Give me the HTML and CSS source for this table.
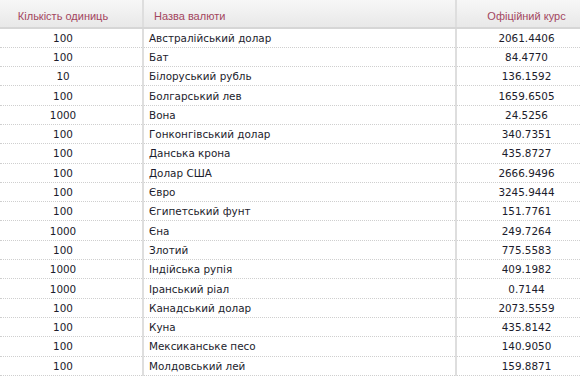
FILE: index.html
```html
<!DOCTYPE html>
<html lang="uk">
<head>
  <meta charset="UTF-8">
  <title>Офіційний курс гривні</title>
  <link rel="stylesheet" href="styles.css">
</head>
<body>
  <table class="rates">
    <thead>
      <tr>
        <th class="col-units">Кількість одиниць</th>
        <th class="col-name">Назва валюти</th>
        <th class="col-rate">Офіційний курс</th>
      </tr>
    </thead>
    <tbody>
      <tr><td class="col-units">100</td><td class="col-name">Австралійський долар</td><td class="col-rate">2061.4406</td></tr>
      <tr><td class="col-units">100</td><td class="col-name">Бат</td><td class="col-rate">84.4770</td></tr>
      <tr><td class="col-units">10</td><td class="col-name">Білоруський рубль</td><td class="col-rate">136.1592</td></tr>
      <tr><td class="col-units">100</td><td class="col-name">Болгарський лев</td><td class="col-rate">1659.6505</td></tr>
      <tr><td class="col-units">1000</td><td class="col-name">Вона</td><td class="col-rate">24.5256</td></tr>
      <tr><td class="col-units">100</td><td class="col-name">Гонконгівський долар</td><td class="col-rate">340.7351</td></tr>
      <tr><td class="col-units">100</td><td class="col-name">Данська крона</td><td class="col-rate">435.8727</td></tr>
      <tr><td class="col-units">100</td><td class="col-name">Долар США</td><td class="col-rate">2666.9496</td></tr>
      <tr><td class="col-units">100</td><td class="col-name">Євро</td><td class="col-rate">3245.9444</td></tr>
      <tr><td class="col-units">100</td><td class="col-name">Єгипетський фунт</td><td class="col-rate">151.7761</td></tr>
      <tr><td class="col-units">1000</td><td class="col-name">Єна</td><td class="col-rate">249.7264</td></tr>
      <tr><td class="col-units">100</td><td class="col-name">Злотий</td><td class="col-rate">775.5583</td></tr>
      <tr><td class="col-units">1000</td><td class="col-name">Індійська рупія</td><td class="col-rate">409.1982</td></tr>
      <tr><td class="col-units">1000</td><td class="col-name">Іранський ріал</td><td class="col-rate">0.7144</td></tr>
      <tr><td class="col-units">100</td><td class="col-name">Канадський долар</td><td class="col-rate">2073.5559</td></tr>
      <tr><td class="col-units">100</td><td class="col-name">Куна</td><td class="col-rate">435.8142</td></tr>
      <tr><td class="col-units">100</td><td class="col-name">Мексиканське песо</td><td class="col-rate">140.9050</td></tr>
      <tr><td class="col-units">100</td><td class="col-name">Молдовський лей</td><td class="col-rate">159.8871</td></tr>
    </tbody>
  </table>
</body>
</html>
```

FILE: styles.css
```css
* {
  box-sizing: border-box;
  margin: 0;
  padding: 0;
}
body {
  background: #ffffff;
  font-family: 'DejaVu Sans', Verdana, sans-serif;
  color: #1c1c2c;
  overflow: hidden;
}
.rates {
  width: 596px;
  border-collapse: collapse;
  table-layout: fixed;
}
.rates th {
  height: 28px;
  font-family: 'Liberation Sans', Tahoma, sans-serif;
  font-size: 11px;
  font-weight: normal;
  color: #a34660;
  background: linear-gradient(to bottom, #f7f7f7, #e8e8e8);
  border-bottom: 2px solid #d6d6d6;
  border-right: 2px solid #dedede;
  padding-top: 5px;
}
.rates td {
  height: 19.3px;
  font-size: 10.4px;
  border-bottom: 1px dotted #cfcfcf;
  border-right: 2px solid #dedede;
}
.rates th:last-child,
.rates td:last-child {
  border-right: none;
}
.col-units {
  width: 143px;
  text-align: center;
  padding-right: 16px;
}
.col-name {
  width: 313px;
  text-align: left;
  padding-left: 5px;
}
.col-rate {
  text-align: center;
}
th.col-name {
  padding-left: 10px;
}
```
